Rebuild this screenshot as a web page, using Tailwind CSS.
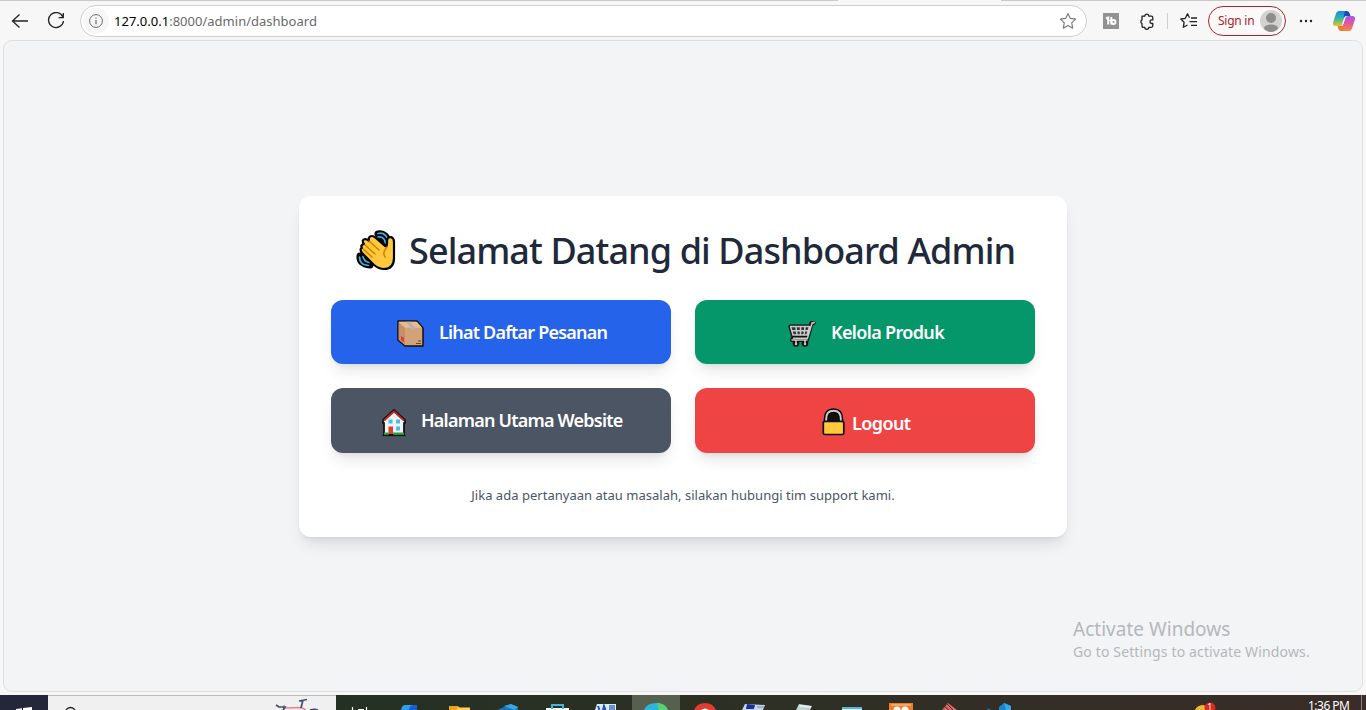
<!DOCTYPE html>
<html lang="id">
<head>
<meta charset="utf-8">
<title>Dashboard Admin</title>
<script src="https://cdn.jsdelivr.net/npm/@tailwindcss/browser@4"></script>
</head>
<body class="w-[1366px] h-[710px] overflow-hidden bg-[#f7f7f7] flex flex-col whitespace-nowrap font-['Noto_Sans','Open_Sans',sans-serif]">

<!-- Browser toolbar -->
<header class="h-[40px] pt-px shrink-0 flex items-center border-t border-[#c9c9c9] relative">
  <svg class="ml-[11px] w-[18px] h-[18px]" viewBox="0 0 18 18" fill="none" stroke="#222" stroke-width="1.3"><path d="M17 9H1.5M8.500 2.500 1.500 9l7 6.500"/></svg>
  <svg class="ml-[18px] w-[18px] h-[18px]" viewBox="0 0 18 18" fill="none" stroke="#222" stroke-width="1.3"><path d="M16 5.2A7.5 7.5 0 1 0 16.5 9M16.3 1v4.7h-4.7"/></svg>
  <div class="ml-[15px] w-[1007px] h-[32px] rounded-full border border-[#cfcfcf] bg-white flex items-center">
    <span class="ml-[2px] size-[26px] rounded-full bg-[#f7f7f7] flex items-center justify-center">
      <svg class="size-[14px]" viewBox="0 0 14 14" fill="none" stroke="#6b6b6b"><circle cx="7" cy="7" r="6.4"/><path d="M7 6v4.3M7 3.5v1.3" stroke-width="1.2"/></svg>
    </span>
    <span class="ml-[5px] text-[13px] leading-[20px] tracking-[0.010px] text-[#6a6a6a]"><span class="text-black">127.0.0.1</span>:8000/admin/dashboard</span>
    <svg class="ml-auto mr-[9px] size-[18px]" viewBox="0 0 18 18" fill="none" stroke="#777" stroke-width="1.1" stroke-linejoin="round"><path d="m9 1.5 2.3 4.9 5.3.7-3.9 3.7 1 5.4L9 13.600l-4.700 2.600 1-5.400L1.400 7.100l5.300-.7z"/></svg>
  </div>
  <svg class="ml-[16px] size-[16px]" viewBox="0 0 16 16"><path fill="#929292" d="M0 0h16v16H0z"/><path d="M3 5.500 5.200 4.500V11.500M8.300 4v7.500" fill="none" stroke="#fff" stroke-width="2"/><circle cx="10.500" cy="9" r="2" fill="none" stroke="#fff" stroke-width="1.900"/><path d="M5 7.500h3.500" stroke="#fff" stroke-width="1.200"/></svg>
  <svg class="ml-[19px] size-[17px]" viewBox="0 0 17 17" fill="none" stroke="#222" stroke-width="1.300" stroke-linejoin="round"><path d="M4 3.200h2.800a2 2 0 0 1 4 0h2.500q1.500 0 1.500 1.500v2.200h-1a1.700 1.700 0 0 0 0 3.600h1v2.300q0 1.500-1.500 1.500h-2.500a2 2 0 0 1-4 0H5.500Q4 14.300 4 12.800v-2.300a2 2 0 0 1 0-3.600z"/></svg>
  <span class="ml-[12px] w-px h-[16px] bg-[#cfcfcf]"></span>
  <svg class="ml-[12px] w-[18px] h-[18px]" viewBox="0 0 18 18" fill="none" stroke="#222" stroke-width="1.300" stroke-linejoin="round"><path d="M9.500 5.800 7.500 1.800 5.300 6.300.8 7l3.300 3.300-.8 5 4.200-2.300M11 6h6M9.500 9.700H17M11 13.400h6"/></svg>
  <div class="ml-[10px] w-[78px] h-[30px] border border-[#a4262c] rounded-full flex items-center bg-[#fbf9f9]">
    <span class="ml-[9px] text-[12px] tracking-[-0.250px] text-[#a4262c]">Sign in</span>
    <svg class="ml-auto mr-[3px] size-[22px]" viewBox="0 0 22 22"><circle cx="11" cy="11" r="11" fill="#d4d2d0"/><circle cx="11" cy="8" r="5" fill="#8f8d8b"/><path fill="#8f8d8b" d="M3.800 18.200Q5 14.500 11 14.500t7.200 3.700Q15 22 11 22t-7.200-3.800z"/></svg>
  </div>
  <svg class="ml-[13px] w-[14px] h-[4px]" viewBox="0 0 14 4" fill="#222"><circle cx="2" cy="2" r="1.200"/><circle cx="7" cy="2" r="1.200"/><circle cx="12" cy="2" r="1.200"/></svg>
  <svg class="ml-[19px] w-[24px] h-[22px]" viewBox="0 0 24 22">
    <defs>
      <linearGradient id="ca" x1="0" y1="0" x2="0" y2="1"><stop offset="0" stop-color="#1688e8"/><stop offset=".5" stop-color="#38b6a0"/><stop offset="1" stop-color="#e6c72c"/></linearGradient>
      <linearGradient id="cb" x1="0" y1="0" x2="0" y2="1"><stop offset="0" stop-color="#a657e8"/><stop offset=".5" stop-color="#e3579b"/><stop offset="1" stop-color="#f58a3c"/></linearGradient>
    </defs>
    <path fill="url(#ca)" d="M7 1h8L10.500 14.500Q10 16 8 16H4Q0 16 1.200 12L4 3.500Q4.800 1 7 1z"/>
    <path fill="#164bc0" d="M13 1h2q2 0 2.700 2.500L18.500 6H14q-2 0-2.600 1.800z"/>
    <path fill="url(#cb)" d="M17 21H9l4.500-13.500Q14 6 16 6h4q4 0 2.800 4L20 18.500q-.8 2.500-3 2.500z"/>
    <path fill="#ef7a38" d="M11 21H9q-2 0-2.700-2.500L5.500 16H10q2 0 2.600-1.800z"/>
    <path fill="#f7f7f7" d="M12.200 7.500h1.200L11.300 14h-1.200z"/>
  </svg>
  <span class="absolute -top-px left-[838px] w-[163px] h-px bg-[#f7f7f7]"></span>
</header>

<!-- Page viewport -->
<main class="ml-[3px] w-[1360px] h-[652px] shrink-0 rounded-[9px] border border-[#dfe0e2] bg-[#f3f4f6] relative flex justify-center">
  <section class="mt-[155px] w-[768px] h-[341px] bg-white rounded-xl shadow-lg p-8">
    <h1 class="h-[40px] mb-8 flex items-center text-[36px] leading-[40px] font-medium text-gray-800 pl-[25px]">
      <svg class="w-[42px] h-[42px] mt-[4px] shrink-0" viewBox="0 0 42 42" stroke-linecap="round" stroke-linejoin="round">
        <g fill="none"><path stroke="#000" stroke-width="7" d="M22 5q8-2 11 10M24 9q5 0 6 6M4 27q-1 8 10 9M7 27q1 5 7 6"/><path fill="#000" d="M20 4 31 5l5 10-5 5zM3 25h8l8 10-10 2z"/><path stroke="#3faedb" stroke-width="1.700" d="M22 4.500q8-2 11 9M22 8q6-1 7.500 6M3.500 28q0 8 9 8.500M7 27.500q1 5 6 6"/></g>
        <path fill="#ffc83d" stroke="#000" stroke-width="2.200" d="M8 15q-3-4 1-5 2 0 4 2-1-5 3-5 2 0 4 2l9 8q2 1 2-2v-3q0-4 4-4 3 1 3 5v16q0 11-10 11-5 0-10-4L6 24q-3-4 0-5-2-3 2-4z"/>
        <path fill="none" stroke="#d67d00" stroke-width="1.500" d="m13 12 10 9M9 16l10 9M7 20l9 8M31 18q-5 5-2 10"/>
      </svg>
      <span class="ml-[11px] mt-[5px] tracking-[-0.900px]">Selamat Datang di Dashboard Admin</span>
    </h1>
    <div class="grid grid-cols-2 gap-6 text-[18px] font-semibold text-white">
      <a class="h-[64px] rounded-xl bg-[#2563eb] shadow-lg flex items-center pl-[65px]">
        <svg class="w-[30px] h-[30px] mt-[3px]" viewBox="0 0 30 30" stroke-linejoin="round"><path fill="#d3a378" stroke="#111" stroke-width="1.500" d="M2 2h19l6 7v18H9l-7-6z"/><path fill="#e5bb94" d="M2.700 2.700h18l5.500 6H9z"/><path fill="#c49068" d="M2.700 3.500 9 9v17l-6.300-5.300z"/><path fill="#b9b2aa" d="M10 2.700h4l5 6v1.500h-4V8.700z"/><path fill="#e33" d="m5 17 3 2v4l-3-2z"/><path stroke="#65422e" stroke-width="1.200" d="M20 24.500h5M22 22h3"/></svg>
        <span class="ml-[13px] mt-px tracking-[-0.800px]">Lihat Daftar Pesanan</span>
      </a>
      <a class="h-[64px] rounded-xl bg-[#059669] shadow-lg flex items-center pl-[93px]">
        <svg class="w-[28px] h-[28px] mt-[4px]" viewBox="0 0 28 28" fill="none" stroke-linecap="round" stroke-linejoin="round"><g stroke="#111" stroke-width="4.200"><path d="M25.500 3h-2l-4 15H5M2.500 6.500h19L19 15H5zM6 18l-2 2h15"/><circle cx="8" cy="23.500" r="1.200"/><circle cx="17" cy="23.500" r="1.200"/></g><path fill="#333" d="M2.500 6.500h19L19 15H5z"/><path stroke="#ccc" stroke-width="1.500" d="M24 3.200l-4.500 15H5.500M2.500 6.500h19L19 15H5zM3.500 10.700h17M8 7l1 8M12.500 7v8M17 7l-1 8M4 20h15M8 20v3M17 20v3"/><path stroke="#e6a0a8" stroke-width="2" d="M26 2.500l-2 .7"/><circle cx="8" cy="24" r="1.200" fill="#ccc"/><circle cx="17" cy="24" r="1.200" fill="#ccc"/></svg>
        <span class="ml-[15px] mt-px tracking-[-0.660px]">Kelola Produk</span>
      </a>
      <a class="h-[65px] rounded-xl bg-[#4b5563] shadow-lg flex items-center pl-[49px]">
        <svg class="w-[28px] h-[30px] mt-[2px]" viewBox="0 0 28 30" stroke-linejoin="round"><path fill="#f3f3f3" stroke="#111" stroke-width="1.800" d="M3 13 14 3l11 10v3h-1v11.500H4V16H3z"/><path fill="none" stroke="#b52a22" stroke-width="2" d="M4 13.500 14 4.500l10 9"/><path fill="#45bfe8" d="M8.500 12.500h4v4h-4zM16 12.500h4v4h-4zM16 19.500h4v4h-4z"/><path fill="#d84128" d="M8.500 19.500h4.500V27H8.500z"/><path fill="#25a33a" d="M4 25.500h4.500V28H4zM13 25.500h11V28H13z"/><path stroke="#111" stroke-width="1.200" d="M2.500 28.500h23"/></svg>
        <span class="ml-[13px] tracking-[-0.780px]">Halaman Utama Website</span>
      </a>
      <a class="h-[65px] rounded-xl bg-[#ef4444] shadow-lg flex items-center pl-[127px]">
        <svg class="w-[24px] h-[28px] mt-[3px]" viewBox="0 0 24 28" stroke-linejoin="round"><path fill="#111" d="M3 14V11q0-10 8.500-10T20 11v3z"/><path fill="none" stroke="#000" stroke-width="4.500" d="M4 14v-3q0-8.500 7.500-8.500T19 11v3"/><path fill="none" stroke="#ccc" stroke-width="2" d="M4.200 14v-3q0-8.200 7.300-8.200t7.300 8.200v3"/><rect x="1.300" y="13.300" width="20.500" height="13.200" rx="1.500" fill="#ffc83d" stroke="#111" stroke-width="1.700"/></svg>
        <span class="ml-[6px] mt-[6px] tracking-[-0.600px]">Logout</span>
      </a>
    </div>
    <p class="mt-8 text-center text-[13px] leading-[20px] tracking-[0.020px] text-gray-600">Jika ada pertanyaan atau masalah, silakan hubungi tim support kami.</p>
  </section>
  <div class="absolute left-[1069px] top-[574px] text-[#b5b7ba]">
    <p class="text-[19px] leading-[28px] tracking-[0.020px]">Activate Windows</p>
    <p class="text-[14px] leading-[18px] tracking-[0.140px]">Go to Settings to activate Windows.</p>
  </div>
</main>

<!-- Taskbar, cut off by the bottom of the screen -->
<footer class="mt-[3px] h-[15px] shrink-0 overflow-hidden flex items-start bg-gradient-to-r from-[#1d3222] via-[#2b3023] to-[#3a2c28]">
  <svg class="w-[1366px] h-[15px]" viewBox="0 0 1366 15">
    <path fill="#24273a" d="M0 0h48v15H0z"/><path fill="#fff" d="m16 14 6-.8V15h-6zM23 13l9-1v3h-9z"/>
    <path fill="#f0f0f0" d="M48 0h288v15H48z"/><path stroke="#bbb" d="M48 .5h288"/>
    <circle cx="70.500" cy="17.500" r="5" fill="none" stroke="#222" stroke-width="1.300"/>
    <g fill="none"><path stroke="#e48294" stroke-width="1.500" d="m284 13 17-.5L306 15M284 10v5"/><path stroke="#42516a" stroke-width="1.700" d="m276 10 3 2h6l-2 3M299 6l8-1.500M303 5l-2 8M310 15q5-1.500 8 0"/></g>
    <path stroke="#fff" d="M352.500 12v3M358 14.500h6M366.500 12v3" fill="none" stroke-width="1.200"/>
    <path fill="#155fd0" d="M402 15q1-5 5-5h10v5z"/><path fill="#2da0ed" d="M401 15q1-5 4-5h8q-4 1-4 5z"/>
    <path fill="#e9a520" d="M449 11h9l2 2h10v2h-21z"/><path fill="#ffd05a" d="M458 12.500h12V15h-14z"/>
    <path fill="#1675bd" d="m497 15 9-4 5-2 7 3v3z"/><path fill="#37a7e6" d="m504 11 7-2 7 3-4 3z"/>
    <path fill="#fff" d="M546 13h23v2h-23z"/><path fill="none" stroke="#41b4df" stroke-width="2" d="M552 14v-4h11v4"/>
    <path fill="#dceafd" d="M597 9h19v6h-21z"/><path fill="none" stroke="#2853a8" stroke-width="2" d="m598 11 1.500 4M603 15l1-4 1.500 4"/><path fill="#6d8fd0" d="M609 10h6v5h-6z"/>
    <path fill="#57604e" d="M632 0h48v15h-48z"/><path fill="#28b8df" d="M644 15q3-7 12-7t12 7z"/><path fill="#59d16c" d="M657 8q8 0 11 7h-9z"/>
    <path fill="#e33b2e" d="M694 15q3-7 11-7t11 7z"/><path fill="#fff" d="M701 15q4-3 8 0z"/>
    <path fill="#c7d6ee" d="m745 9 20 1-2 5h-21z"/><path fill="#1b2fa0" d="m747 9 8 1-1 4h-8z"/><path stroke="#6e82bd" d="M757 12h7"/>
    <path fill="#b9d6d0" d="m799 9 13 2-2 4h-14z"/><path fill="#e6eeee" d="m800 10 11 1v2l-12-1z"/>
    <path fill="#d9f0fa" d="M842 12h20v3h-20z"/><path fill="#54b6e5" d="M842 12h20v2h-20z"/>
    <path fill="#f07d29" d="M889 8h24v7h-24z"/><circle cx="897" cy="15" r="3.500" fill="#fff"/><circle cx="905" cy="15" r="3.500" fill="#fff"/><path stroke="#ffd0a0" d="M891 10h20"/>
    <path fill="#e4656b" d="m942 15 6-7 9 7z"/><path stroke="#51292b" d="m944 11 5 4M947 9l6 6"/>
    <path fill="#1687cf" d="m999 12 5-4 7 3v4h-12z"/><path fill="#3aa7e8" d="m1004 8 7 3v4h-5z"/><path fill="#1672b3" d="m988 13 3 2h-4z"/>
    <path fill="#edb82e" d="M1195 15q2-5 9-5l4 5z"/><circle cx="1210" cy="13" r="5.500" fill="#d92b20"/><text x="1207.500" y="15" font-size="8" fill="#fff">1</text>
    <text x="1308" y="15" font-size="12" textLength="42" fill="#fff">1:36 PM</text><path stroke="#85807c" d="M1361.500 0v15"/>
  </svg>
</footer>
</body>
</html>
